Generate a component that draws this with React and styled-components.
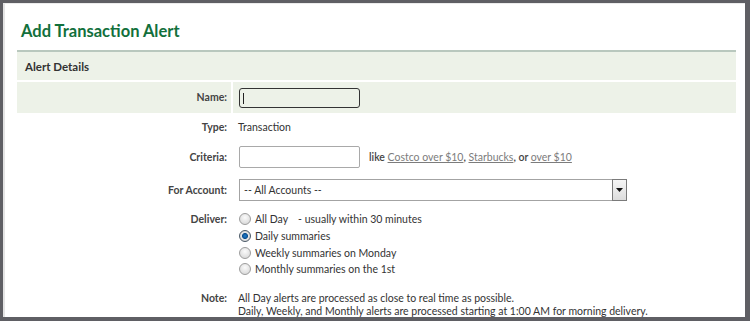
import React from "react";
import styled, { createGlobalStyle } from "styled-components";

const GlobalStyle = createGlobalStyle`
  html, body {
    margin: 0;
    padding: 0;
    background: #5f5f64;
  }
  body {
    font-family: Lato, "Open Sans", Arial, sans-serif;
  }
`;

const bandColor = "#edf2e8";

const Frame = styled.div`
  height: 321px;
  box-sizing: border-box;
  padding: 3px 5px 4px 3px;
  background: #5f5f64;
`;

const Panel = styled.div`
  height: 100%;
  box-sizing: border-box;
  background: #fff;
  border-left: 2px solid #e4e4e4;
  border-top: 1px solid #ececec;
  padding: 0 9px 0 12px;
  overflow: hidden;
`;

const Title = styled.h1`
  margin: 0 0 9px;
  padding: 17px 0 0 4px;
  font-size: 16.5px;
  line-height: 20px;
  font-weight: 700;
  color: #12703c;
`;

const SectionHeader = styled.div`
  border-top: 2px solid #b9c8be;
  background: ${bandColor};
  height: 28px;
  display: flex;
  align-items: center;
  padding-left: 8px;
  margin-bottom: 2px;
  font-size: 11.5px;
  font-weight: 700;
  color: #333;
`;

const Row = styled.div`
  display: grid;
  grid-template-columns: 214px 1fr;
  column-gap: 2px;
  min-height: ${(p) => p.$h || 28}px;
  align-items: ${(p) => (p.$top ? "start" : "stretch")};
  padding-top: ${(p) => p.$pt || 0}px;
`;

const Label = styled.div`
  display: flex;
  align-items: ${(p) => (p.$top ? "flex-start" : "center")};
  justify-content: flex-end;
  padding-right: 4px;
  font-size: 10.5px;
  font-weight: 700;
  color: #444;
  background: ${(p) => (p.$band ? bandColor : "transparent")};
  line-height: ${(p) => p.$lh || 13}px;
`;

const Cell = styled.div`
  display: flex;
  align-items: center;
  padding-left: 5px;
  font-size: 10.5px;
  color: #333;
  background: ${(p) => (p.$band ? bandColor : "transparent")};
`;

const CaretWrap = styled.div`
  position: relative;
  margin-left: 1px;
  &::after {
    content: "";
    position: absolute;
    left: 4px;
    top: 5px;
    width: 1px;
    height: 11px;
    background: #222;
  }
`;

const TextBox = styled.input`
  box-sizing: border-box;
  width: 121px;
  height: ${(p) => (p.$focused ? 20 : 22)}px;
  margin: 0 0 0 ${(p) => (p.$focused ? 0 : 1)}px;
  padding: 0 4px;
  border: ${(p) => (p.$focused ? "1.5px solid #333" : "1px solid #a9a9a9")};
  border-radius: ${(p) => (p.$focused ? 3 : 2)}px;
  background: ${(p) => (p.$focused ? bandColor : "#fff")};
  font: inherit;
  outline: none;
`;

const Hint = styled.span`
  margin-left: 9px;
  font-size: 10.5px;
  color: #444;
  font-weight: 600;
`;

const HintLink = styled.a`
  color: #7c7c7c;
  font-weight: 400;
  text-decoration: underline;
  cursor: pointer;
`;

const SelectBox = styled.div`
  display: flex;
  box-sizing: border-box;
  width: 388px;
  height: 22px;
  margin-left: 1px;
  border: 1px solid #a3a3a3;
  background: #fff;
`;

const Select = styled.select`
  flex: 1;
  appearance: none;
  border: none;
  background: transparent;
  padding: 0 4px;
  font: inherit;
  font-size: 10.5px;
  color: #333;
  outline: none;
`;

const ArrowButton = styled.div`
  width: 15px;
  box-sizing: border-box;
  border: 1px solid #7a7a7a;
  margin: -1px -1px -1px 0;
  background: linear-gradient(#f6f6f6, #dcdcdc);
  display: flex;
  align-items: center;
  justify-content: center;
`;

const Options = styled.div`
  display: flex;
  flex-direction: column;
  padding-left: 6px;
`;

const Option = styled.label`
  display: flex;
  align-items: center;
  height: 16.7px;
  font-size: 10.5px;
  color: #333;
`;

const Radio = styled.input`
  appearance: none;
  margin: 0 4px 0 0;
  width: 12px;
  height: 12px;
  border-radius: 50%;
  border: 1px solid #9d9d9d;
  background: radial-gradient(circle at 50% 35%, #fbfbfb, #d2d2d2);
  box-sizing: border-box;
  &:checked {
    border-color: #4a5866;
    background: radial-gradient(circle, #1f7fd0 0, #0d4f8f 2.6px, #e6e6e6 3.4px, #c8c8c8 100%);
  }
`;

const Aside = styled.span`
  margin-left: 10px;
`;

const NoteText = styled.div`
  padding-left: 5px;
  font-size: 10.5px;
  line-height: 13px;
  color: #333;
`;

const links = ["Costco over $10", "Starbucks", "over $10"];

const App = () => {
  const [deliver, setDeliver] = React.useState("daily");
  const choices = [
    { id: "all", text: "All Day", aside: "- usually within 30 minutes" },
    { id: "daily", text: "Daily summaries" },
    { id: "weekly", text: "Weekly summaries on Monday" },
    { id: "monthly", text: "Monthly summaries on the 1st" },
  ];
  return (
    <Frame>
      <GlobalStyle />
      <Panel>
        <Title>Add Transaction Alert</Title>
        <SectionHeader>Alert Details</SectionHeader>

        <Row $h={31}>
          <Label $band>Name:</Label>
          <Cell $band>
            <CaretWrap>
              <TextBox $focused type="text" />
            </CaretWrap>
          </Cell>
        </Row>

        <Row $h={28}>
          <Label>Type:</Label>
          <Cell>Transaction</Cell>
        </Row>

        <Row $h={32}>
          <Label>Criteria:</Label>
          <Cell>
            <TextBox type="text" />
            <Hint>
              like <HintLink>{links[0]}</HintLink>, <HintLink>{links[1]}</HintLink>, or{" "}
              <HintLink>{links[2]}</HintLink>
            </Hint>
          </Cell>
        </Row>

        <Row $h={34}>
          <Label>For Account:</Label>
          <Cell>
            <SelectBox>
              <Select defaultValue="all">
                <option value="all">-- All Accounts --</option>
              </Select>
              <ArrowButton>
                <svg width="7" height="4" viewBox="0 0 7 4">
                  <path d="M0 0h7L3.5 4z" fill="#111" />
                </svg>
              </ArrowButton>
            </SelectBox>
          </Cell>
        </Row>

        <Row $h={81} $top $pt={4}>
          <Label $top $lh={16.7}>Deliver:</Label>
          <Options>
            {choices.map((c) => (
              <Option key={c.id}>
                <Radio
                  type="radio"
                  name="deliver"
                  checked={deliver === c.id}
                  onChange={() => setDeliver(c.id)}
                />
                {c.text}
                {c.aside && <Aside>{c.aside}</Aside>}
              </Option>
            ))}
          </Options>
        </Row>

        <Row $top $h={28}>
          <Label $top>Note:</Label>
          <NoteText>
            All Day alerts are processed as close to real time as possible.
            <br />
            Daily, Weekly, and Monthly alerts are processed starting at 1:00 AM for morning delivery.
          </NoteText>
        </Row>
      </Panel>
    </Frame>
  );
};

export default App;
